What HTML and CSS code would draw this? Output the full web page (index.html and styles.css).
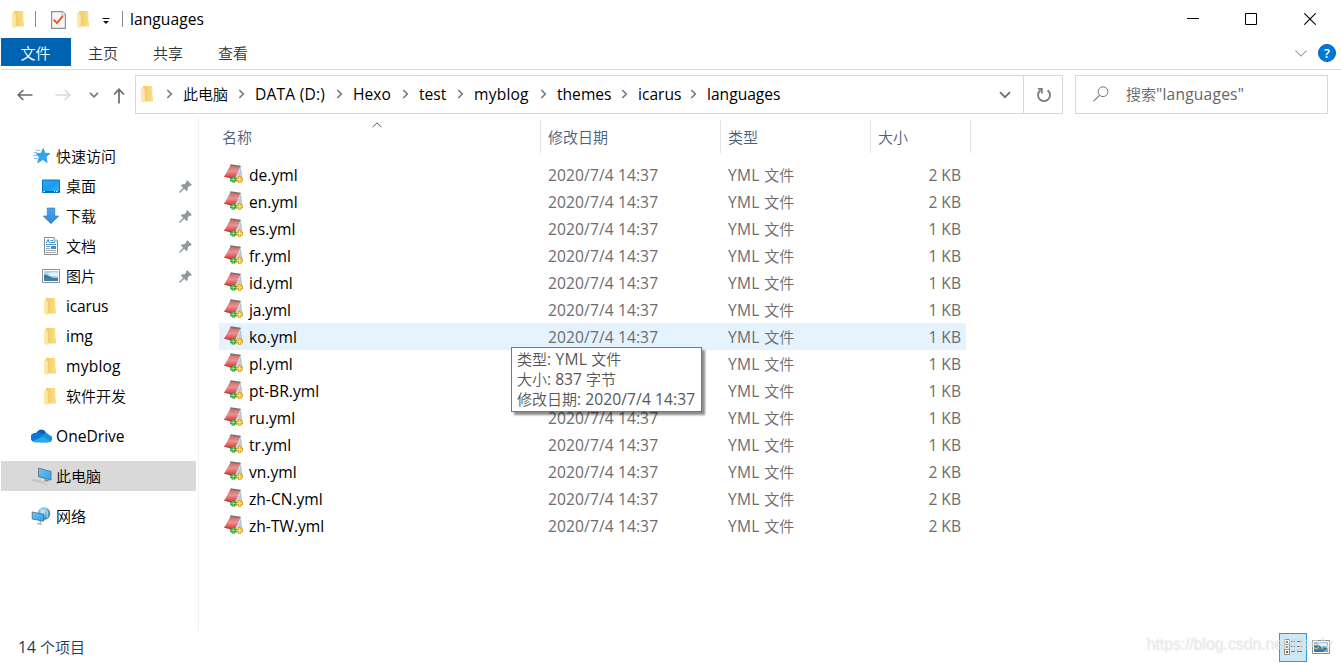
FILE: index.html
```html
<!DOCTYPE html>
<html lang="zh-CN">
<head>
<meta charset="utf-8">
<title>languages</title>
<link rel="stylesheet" href="styles.css">
</head>
<body>
<svg class="defs" width="0" height="0" aria-hidden="true">
  <defs>
    <linearGradient id="gold" x1="0" x2="1" y1="0" y2="0"><stop offset="0" stop-color="#ecca68"/><stop offset="1" stop-color="#ffdf86"/></linearGradient>
    <linearGradient id="sky" x1="0" y1="0" x2="1" y2="1"><stop offset="0" stop-color="#2aa9f5"/><stop offset=".5" stop-color="#1a9bf2"/><stop offset="1" stop-color="#45b7ff"/></linearGradient>
    <linearGradient id="screen" x1="0" y1="0" x2="1" y2="1"><stop offset="0" stop-color="#6ac4f8"/><stop offset="1" stop-color="#2aa3f0"/></linearGradient>
    <linearGradient id="red" x1="0" y1="0" x2="0" y2="1"><stop offset="0" stop-color="#c9666a"/><stop offset=".45" stop-color="#e99293"/><stop offset=".7" stop-color="#e8605f"/><stop offset="1" stop-color="#d9302e"/></linearGradient>
    <linearGradient id="down" x1="0" y1="0" x2="0" y2="1"><stop offset="0" stop-color="#4fa3ea"/><stop offset="1" stop-color="#2d88dc"/></linearGradient>
    <radialGradient id="globe" cx=".4" cy=".35" r=".7"><stop offset="0" stop-color="#d4f0fc"/><stop offset=".5" stop-color="#6db5d8"/><stop offset="1" stop-color="#39759b"/></radialGradient>
    <symbol id="folder" viewBox="0 0 13 18"><path d="M2 0H11.3V10.5L12 11V15.5H2Z" fill="url(#gold)"/><path d="M0 1L3.8 3.4V17.6L0 15.5Z" fill="#ffe8a4"/></symbol>
    <symbol id="yml" viewBox="0 0 20 20">
      <path d="M14.5 2.5L17 2.8 18.8 17 10 18.5 5 14Z" fill="#cfd9e2"/><path d="M16.3 5L17.6 14M14.6 8L15.6 13" stroke="#a9b9c6" stroke-width=".8"/>
      <path d="M6.5 1.2L16.3 2.6 10.8 14.8 .3 12.4Z" fill="url(#red)"/><path d="M.3 12.2L10.8 14.6" stroke="#c23836" stroke-width="1.1"/><path d="M6.3 .9L16.6 2.4" stroke="#75706f" stroke-width="1.5"/>
      <path d="M9.3 12.4V18.6M6.2 15.5H12.4" stroke="#2e9e3c" stroke-width="3.4"/><path d="M9.3 13.3V17.7M7.1 15.5H11.5" stroke="#8be387" stroke-width="1.1"/>
      <path d="M15.6 12.2V18.8M12.3 15.5H18.9" stroke="#d3a01c" stroke-width="3.4"/><path d="M15.6 13V18M13.1 15.5H18.1" stroke="#ffe564" stroke-width="1.6"/>
    </symbol>
    <symbol id="pin" viewBox="0 0 13 13"><path d="M8.3 .2L12.8 4.7 11.7 6 10.8 5.6 8.6 7.8C9 9.2 8.7 10.4 7.8 11.3L5.2 8.7 1.2 12.8.3 12.7 .2 11.8 4.2 7.8 1.7 5.3C2.6 4.4 4 4.1 5.2 4.4L7.4 2.3 7 1.4Z" fill="#8e989f"/></symbol>
    <symbol id="sep" viewBox="0 0 7 10"><path d="M1.3 1L5.3 5 1.3 9" fill="none" stroke="#777" stroke-width="1.6"/></symbol>
  </defs>
</svg>
<div class="window">
  <header class="titlebar">
    <svg class="tb-folder" width="13" height="18"><use href="#folder"/></svg>
    <span class="bar"></span>
    <svg class="tb-check" width="15" height="18" viewBox="0 0 15 18"><path d="M.6.6H11.5L14.4 3.5V17.4H.6Z" fill="#f6f6f7" stroke="#919191" stroke-width="1.2"/><path d="M11 .8V4H14.2" fill="#fff" stroke="#aaa" stroke-width=".8"/><path d="M2.7 8.7L6 12.1 11.9 4.9" fill="none" stroke="#ed561b" stroke-width="1.9"/></svg>
    <svg class="tb-folder2" width="13" height="18"><use href="#folder"/></svg>
    <svg class="tb-menu" width="8" height="7" viewBox="0 0 8 7"><path d="M.5 .5H7.5" stroke="#111"/><path d="M1 3H7L4 6Z" fill="#111"/></svg>
    <span class="bar bar2"></span>
    <span class="title">languages</span>
    <div class="controls">
      <svg width="12" height="12" viewBox="0 0 12 12"><path d="M0 5.5H12" stroke="#000"/></svg>
      <svg width="12" height="12" viewBox="0 0 12 12"><path d="M.5.5H11.5V11.5H.5Z" fill="none" stroke="#000"/></svg>
      <svg width="12" height="12" viewBox="0 0 12 12"><path d="M.3.3L11.7 11.7M11.7.3L.3 11.7" stroke="#000" stroke-width="1.1"/></svg>
    </div>
  </header>
  <nav class="ribbon">
    <span class="tab file zh">文件</span><span class="tab zh">主页</span><span class="tab zh">共享</span><span class="tab zh">查看</span>
    <div class="ribbon-right">
      <svg width="12" height="7" viewBox="0 0 12 7"><path d="M.5.7L6 6.1 11.5.7" fill="none" stroke="#999" stroke-width="1.1"/></svg>
      <span class="help">?</span>
    </div>
  </nav>
  <div class="navbar">
    <div class="arrows">
      <svg width="16" height="12" viewBox="0 0 16 12"><path d="M6.3 1L1.2 6 6.3 11M1.2 6H15.5" fill="none" stroke="#6c6c6c" stroke-width="1.7"/></svg>
      <svg width="16" height="12" viewBox="0 0 16 12"><path d="M9.7 1L14.8 6 9.7 11M14.8 6H.5" fill="none" stroke="#d9d9d9" stroke-width="1.7"/></svg>
      <svg width="10" height="6" viewBox="0 0 10 6"><path d="M1 .8L5 4.8 9 .8" fill="none" stroke="#777" stroke-width="1.7"/></svg>
      <svg class="up" width="12" height="16" viewBox="0 0 12 16"><path d="M1 6.5L6 1.3 11 6.5M6 1.3V15.5" fill="none" stroke="#6c6c6c" stroke-width="1.7"/></svg>
    </div>
    <div class="address">
      <svg class="addr-folder" width="13" height="18"><use href="#folder"/></svg>
      <svg class="addr-sep" width="7" height="10"><use href="#sep"/></svg>
      <div class="crumbs">
        <span class="crumb"><b class="zh">此电脑</b><svg width="7" height="10"><use href="#sep"/></svg></span>
        <span class="crumb"><b class="wide">DATA (D:)</b><svg width="7" height="10"><use href="#sep"/></svg></span>
        <span class="crumb"><b>Hexo</b><svg width="7" height="10"><use href="#sep"/></svg></span>
        <span class="crumb"><b>test</b><svg width="7" height="10"><use href="#sep"/></svg></span>
        <span class="crumb"><b class="wide">myblog</b><svg width="7" height="10"><use href="#sep"/></svg></span>
        <span class="crumb"><b>themes</b><svg width="7" height="10"><use href="#sep"/></svg></span>
        <span class="crumb"><b>icarus</b><svg width="7" height="10"><use href="#sep"/></svg></span>
        <span class="crumb"><b>languages</b></span>
      </div>
      <svg class="drop" width="12" height="8" viewBox="0 0 12 8"><path d="M1 1.2L6 6.2 11 1.2" fill="none" stroke="#707070" stroke-width="1.8"/></svg>
      <div class="refresh"><svg width="16" height="16" viewBox="0 0 16 16"><path d="M4.6 3.2A6 6 0 1 0 11.6 3.3" fill="none" stroke="#7b7b7b" stroke-width="1.9"/><path d="M2 1.9H5.9V6.4" fill="none" stroke="#7b7b7b" stroke-width="1.7"/></svg></div>
    </div>
    <div class="search">
      <svg width="16" height="16" viewBox="0 0 16 16"><circle cx="10" cy="5.7" r="4.9" fill="none" stroke="#777"/><path d="M6.5 9.3L.6 15.2" stroke="#777" stroke-width="1.1"/></svg>
      <span class="wide"><span class="zh">搜索</span>"languages"</span>
    </div>
  </div>
  <main class="content">
    <aside class="side">
      <div class="item top"><svg width="18" height="18" viewBox="0 0 18 18"><path d="M10.3 1.6L11.8 6.2 17 6.5 13 9.8 14.2 15.5 9.8 12.5 4.6 15.8 6.3 10.2 3.2 6.6 8 6.4Z" fill="#2ba8f0" stroke="#2190d8" stroke-width=".7"/><path d="M2.5 3.3H7.5M1 5.6H4M0 8.5H4M1 11.5H5" stroke="#7cc4ee" stroke-width="1"/></svg><span class="zh">快速访问</span></div>
      <div class="item"><svg width="18" height="18" viewBox="0 0 18 18"><path d="M.5 3H17.5V15.5H.5Z" fill="url(#sky)" stroke="#0874bd"/><path d="M1 14.5H17" stroke="#075a92"/><path d="M1.5 14.5H3M12 14.5H13M14 14.5H15.5" stroke="#fff"/></svg><span class="zh">桌面</span><svg class="pin" width="13" height="13"><use href="#pin"/></svg></div>
      <div class="item"><svg width="18" height="18" viewBox="0 0 18 18"><path d="M5.2 1H12.8V9H16.8L9 16.8 1.2 9H5.2Z" fill="url(#down)" stroke="#2678c2" stroke-width=".6"/></svg><span class="zh">下载</span><svg class="pin" width="13" height="13"><use href="#pin"/></svg></div>
      <div class="item"><svg width="18" height="18" viewBox="0 0 18 18"><path d="M2.5.5H12L15.5 4V17.5H2.5Z" fill="#fff" stroke="#8a8a8a"/><path d="M12 .5V4H15.5" fill="#eee" stroke="#999"/><path d="M4.2 6L6.2 2.5 7.4 6" fill="none" stroke="#238bd0"/><path d="M8.5 3.5H11M8.5 5.5H13M4 7.5H14M4 9.5H8" stroke="#3c9ad8"/><path d="M4 11.5H8M4 13.5H14M4 15.5H14" stroke="#a8a8a8"/><path d="M9 9H14V12H9Z" fill="#3e91bc"/></svg><span class="zh">文档</span><svg class="pin" width="13" height="13"><use href="#pin"/></svg></div>
      <div class="item"><svg width="18" height="18" viewBox="0 0 18 18"><path d="M.5 2.5H17.5V15.5H.5Z" fill="#fff" stroke="#909090"/><path d="M2 4H16V14H2Z" fill="#a9d3f3"/><path d="M6 7Q10 4 16 6V9H8Z" fill="#e3f2fb"/><path d="M2 7.5Q5 7.5 8 9.5T16 11V12H2Z" fill="#4a786c"/><path d="M2 11Q8 10.5 16 12V14H2Z" fill="#3d7fb2"/></svg><span class="zh">图片</span><svg class="pin" width="13" height="13"><use href="#pin"/></svg></div>
      <div class="item"><svg class="f" width="13" height="18"><use href="#folder"/></svg><span class="tight">icarus</span></div>
      <div class="item"><svg class="f" width="13" height="18"><use href="#folder"/></svg><span>img</span></div>
      <div class="item"><svg class="f" width="13" height="18"><use href="#folder"/></svg><span class="wide">myblog</span></div>
      <div class="item"><svg class="f" width="13" height="18"><use href="#folder"/></svg><span class="zh">软件开发</span></div>
      <div class="item root"><svg width="21" height="14" viewBox="0 0 21 14"><path d="M5.5 4C7-.4 13-1 15.2 4L12 9 5 8Z" fill="#0364b8"/><path d="M4 4C6 2.8 8.5 3.3 10 4.5L14 7 8 13H4A4.4 4.4 0 0 1 4 4Z" fill="#0f78d4"/><path d="M11 6.5C13 3.5 17 3.4 18 6A3.6 3.6 0 0 1 17 13.3H9Z" fill="#1490df"/><path d="M2 12.2L11 7.4 19.4 11.8Q18 13.5 16 13.5H5Q3.3 13.5 2 12.2Z" fill="#28a8ea"/></svg><span>OneDrive</span></div>
      <div class="item root selected"><svg width="21" height="18" viewBox="0 0 21 18"><path d="M7.5 1.2L20 4.4V13L7.5 9.7Z" fill="url(#screen)" stroke="#5a6a74" stroke-width=".8"/><path d="M14 12L18 13.2 17 14.7 13 13.8Z" fill="#858e94"/><path d="M.5 13.2L11 16M2 12.4L14 15.4M12 16.4L16 17.4" stroke="#b0b4b7" stroke-width=".7"/></svg><span class="zh">此电脑</span></div>
      <div class="item root"><svg width="21" height="18" viewBox="0 0 21 18"><circle cx="13" cy="6.5" r="6.3" fill="url(#globe)"/><path d="M9 2Q13 4 11 7M14 1Q18 5 16 11" fill="none" stroke="#cbe9f5" stroke-width=".8"/><path d="M1.2 5L12.6 7.2V14.2L1.2 12Z" fill="url(#screen)" stroke="#5a6a74" stroke-width=".8"/><path d="M8 14.2L10 14.6V16.3L6 16.6 11 17.3" fill="none" stroke="#a3abb0" stroke-width="1"/></svg><span class="zh">网络</span></div>
    </aside>
    <section class="files">
      <div class="head zh"><span>名称<svg class="sort" width="10" height="6" viewBox="0 0 10 6"><path d="M.5 5.3L5 .8 9.5 5.3" fill="none" stroke="#555"/></svg></span><span>修改日期</span><span>类型</span><span>大小</span></div>
      <div class="row"><svg width="20" height="20"><use href="#yml"/></svg><span class="name">de.yml</span><span class="date">2020/7/4 14:37</span><span class="type">YML <i class="zh">文件</i></span><span class="size">2 KB</span></div>
      <div class="row"><svg width="20" height="20"><use href="#yml"/></svg><span class="name">en.yml</span><span class="date">2020/7/4 14:37</span><span class="type">YML <i class="zh">文件</i></span><span class="size">2 KB</span></div>
      <div class="row"><svg width="20" height="20"><use href="#yml"/></svg><span class="name">es.yml</span><span class="date">2020/7/4 14:37</span><span class="type">YML <i class="zh">文件</i></span><span class="size">1 KB</span></div>
      <div class="row"><svg width="20" height="20"><use href="#yml"/></svg><span class="name">fr.yml</span><span class="date">2020/7/4 14:37</span><span class="type">YML <i class="zh">文件</i></span><span class="size">1 KB</span></div>
      <div class="row"><svg width="20" height="20"><use href="#yml"/></svg><span class="name">id.yml</span><span class="date">2020/7/4 14:37</span><span class="type">YML <i class="zh">文件</i></span><span class="size">1 KB</span></div>
      <div class="row"><svg width="20" height="20"><use href="#yml"/></svg><span class="name tight">ja.yml</span><span class="date">2020/7/4 14:37</span><span class="type">YML <i class="zh">文件</i></span><span class="size">1 KB</span></div>
      <div class="row hover"><svg width="20" height="20"><use href="#yml"/></svg><span class="name">ko.yml</span><span class="date">2020/7/4 14:37</span><span class="type">YML <i class="zh">文件</i></span><span class="size">1 KB</span>
        <div class="tooltip"><div class="wide"><i class="zh">类型</i>: YML <i class="zh">文件</i></div><div><i class="zh">大小</i>: 837 <i class="zh">字节</i></div><div><i class="zh">修改日期</i>: <i class="date">2020/7/4 14:37</i></div></div></div>
      <div class="row"><svg width="20" height="20"><use href="#yml"/></svg><span class="name">pl.yml</span><span class="date">2020/7/4 14:37</span><span class="type">YML <i class="zh">文件</i></span><span class="size">1 KB</span></div>
      <div class="row"><svg width="20" height="20"><use href="#yml"/></svg><span class="name">pt-BR.yml</span><span class="date">2020/7/4 14:37</span><span class="type">YML <i class="zh">文件</i></span><span class="size">1 KB</span></div>
      <div class="row"><svg width="20" height="20"><use href="#yml"/></svg><span class="name">ru.yml</span><span class="date">2020/7/4 14:37</span><span class="type">YML <i class="zh">文件</i></span><span class="size">1 KB</span></div>
      <div class="row"><svg width="20" height="20"><use href="#yml"/></svg><span class="name">tr.yml</span><span class="date">2020/7/4 14:37</span><span class="type">YML <i class="zh">文件</i></span><span class="size">1 KB</span></div>
      <div class="row"><svg width="20" height="20"><use href="#yml"/></svg><span class="name">vn.yml</span><span class="date">2020/7/4 14:37</span><span class="type">YML <i class="zh">文件</i></span><span class="size">2 KB</span></div>
      <div class="row"><svg width="20" height="20"><use href="#yml"/></svg><span class="name">zh-CN.yml</span><span class="date">2020/7/4 14:37</span><span class="type">YML <i class="zh">文件</i></span><span class="size">2 KB</span></div>
      <div class="row"><svg width="20" height="20"><use href="#yml"/></svg><span class="name">zh-TW.yml</span><span class="date">2020/7/4 14:37</span><span class="type">YML <i class="zh">文件</i></span><span class="size">2 KB</span></div>
    </section>
  </main>
  <footer class="status">
    <span class="count">14 <i class="zh">个项目</i></span>
    <span class="view on"><svg width="20" height="18" viewBox="0 0 20 18"><path d="M1.5 1.5H6.5V16.5H1.5ZM1.5 6.5H6.5M1.5 11.5H6.5" fill="#fff" stroke="#8b8b8b"/><path d="M3 4H5" stroke="#528cb8" stroke-width="2"/><path d="M3 9H5" stroke="#5c8e37" stroke-width="2"/><path d="M3 14H5" stroke="#c83b24" stroke-width="2"/><path d="M8 3.5H12M14 3.5H19M8 8.5H12M14 8.5H19M8 13.5H12M14 13.5H19" stroke="#777"/></svg></span>
    <span class="view"><svg width="18" height="14" viewBox="0 0 18 14"><path d="M.5.5H17.5V13.5H.5Z" fill="#fff" stroke="#8b8b8b"/><path d="M2 2H16V12H2Z" fill="#8fc2ee"/><path d="M6 4Q10 2 15 4V6H8Z" fill="#eef8ff"/><path d="M2 5Q6 4 9 7L16 8V10H2Z" fill="#3e7061"/><path d="M2 9Q9 8 16 10V12H2Z" fill="#3376b3"/></svg></span>
    <span class="watermark">https://blog.csdn.net/Deely</span>
  </footer>
</div>
</body>
</html>
```

FILE: styles.css
```css
* { box-sizing: border-box; }
body { margin: 0; background: #fff; color: #000; font: 15.6px/20px "Open Sans", "Noto Sans CJK SC", sans-serif; }
svg { display: block; flex: none; }
b, i { font-weight: normal; font-style: normal; }
.defs { position: absolute; }
.zh { font-family: "Noto Sans CJK SC", sans-serif; font-size: 15px; font-weight: 350; letter-spacing: 0; }
.wide { letter-spacing: .2px; }
.tight { letter-spacing: -.2px; }
.window { width: 1341px; height: 663px; overflow: hidden; display: flex; flex-direction: column; padding-left: 1px; white-space: nowrap; }

.titlebar { height: 38px; display: flex; align-items: center; padding-left: 11px; }
.tb-folder, .tb-folder2 { margin-top: 2px; }
.bar { width: 1px; height: 16px; background: #888; margin-left: 10px; }
.tb-check { margin-left: 15px; margin-top: 2px; }
.tb-folder2 { margin-left: 11px; }
.tb-menu { margin-left: 12px; margin-top: 4px; }
.bar2 { margin-left: 12px; }
.title { margin-left: 7px; letter-spacing: .05px; }
.controls { margin-left: auto; display: flex; padding-right: 25px; }
.controls svg:nth-child(2) { margin: 0 47px 0 46px; }

.ribbon { height: 32px; display: flex; border-bottom: 1px solid #dadbdc; }
.tab { width: 65px; height: 28px; line-height: 29px; text-align: center; color: #333; padding-right: 1px; }
.tab.file { width: 70px; background: #0063b1; color: #fff; }
.ribbon-right { margin-left: auto; display: flex; align-items: center; gap: 11px; padding: 0 5px 1px 0; }
.help { width: 18px; height: 18px; border-radius: 50%; background: #0078d7; border: 1px solid #0063b1; color: #fff; font-size: 13px; font-weight: 600; line-height: 16px; text-align: center; }

.navbar { height: 48px; display: flex; align-items: center; }
.arrows { width: 134px; display: flex; align-items: center; padding: 2px 0 0 16px; }
.arrows svg:nth-child(2) { margin-left: 22px; }
.arrows svg:nth-child(3) { margin-left: 18px; }
.arrows .up { margin-left: 14px; margin-top: 2px; }
.address { width: 928px; height: 39px; border: 1px solid #d9d9d9; display: flex; align-items: center; }
.addr-folder { margin-left: 5px; margin-top: 2px; }
.addr-sep { margin-left: 12px; }
.crumbs { display: grid; grid-template-columns: 72px 98px 66px 55px 83px 81px 69px 80px; margin-left: 10px; }
.crumb { display: flex; align-items: center; justify-content: space-between; padding-right: 10px; }
.crumb:last-child { padding-right: 0; }
.drop { margin-left: auto; margin-top: 2px; }
.refresh { width: 39px; height: 37px; margin-left: 12px; border-left: 1px solid #d9d9d9; display: flex; align-items: center; justify-content: center; padding: 1px 0 0 2px; }
.search { width: 253px; height: 39px; margin-left: 12px; border: 1px solid #d9d9d9; display: flex; align-items: center; gap: 17px; padding-left: 17px; color: #666; }

.content { height: 513px; display: flex; }
.side { width: 198px; border-right: 1px solid #f1f1f1; padding-top: 23px; }
.item { height: 30px; width: 195px; display: flex; align-items: center; padding-left: 41px; }
.item > span { margin-left: 6px; }
.item .f { margin: 2px 3px 0 2px; }
.item .pin { margin-left: auto; margin-right: 4px; }
.item.top { padding-left: 32px; }
.item.top > span { margin-left: 5px; }
.item.root { padding-left: 30px; margin-top: 10px; }
.item.root > span { margin-left: 4px; }
.selected { background: #d9d9d9; }

.files { flex: 1; padding: 2px 0 0 20px; }
.head { display: grid; grid-template-columns: 322px 180px 150px 100px; height: 33px; color: #4c607a; line-height: 33px; margin-bottom: 8px; }
.head span { border-right: 1px solid #e5e5e5; padding-left: 7px; position: relative; }
.head span:first-child { padding-left: 3px; }
.sort { position: absolute; left: 153px; top: 2px; }
.row { position: relative; width: 747px; height: 27px; display: grid; grid-template-columns: 25px 299px 180px 150px 83px; align-items: center; padding-left: 5px; color: #6d6d6d; }
.row > svg { margin-top: -1px; }
.row .name { color: #000; }
.row .date { letter-spacing: .1px; }
.row .type { letter-spacing: .3px; }
.row .size { text-align: right; }
.hover { background: #e5f3ff; }
.tooltip { position: absolute; z-index: 2; left: 292px; top: 24px; width: 191px; height: 65px; padding: 1px 5px; background: #fff; border: 1px solid #767676; box-shadow: 3px 3px 2px rgba(0,0,0,.45); color: #575757; }

.status { position: relative; height: 32px; display: flex; align-items: center; padding: 0 6px 0 17px; }
.count { color: #1e395b; }
.view { width: 28px; height: 29px; display: flex; align-items: center; justify-content: center; }
.view.on { margin-left: auto; background: #cce8f6; border: 1px solid #26a0da; }
.watermark { position: absolute; left: 1145px; top: 3px; color: rgba(236,236,236,.6); text-shadow: 1px 1px 1px rgba(190,190,190,.4); font: 16px/20px "Liberation Sans", Arial, sans-serif; letter-spacing: -.12px; }
```
